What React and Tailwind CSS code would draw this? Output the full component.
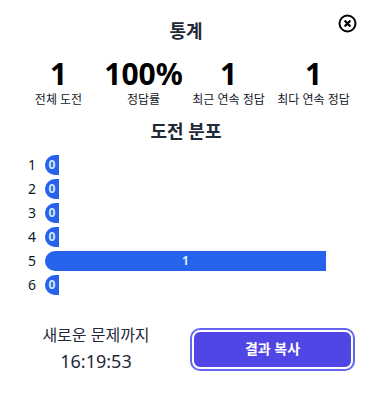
import React from "react";

const stats = [
  { value: "1", label: "전체 도전" },
  { value: "100%", label: "정답률" },
  { value: "1", label: "최근 연속 정답" },
  { value: "1", label: "최다 연속 정답" },
];

const dist = [0, 0, 0, 0, 1, 0];

export default function App() {
  const max = Math.max(...dist);
  return (
    <div
      className="relative w-[372px] h-[393px] bg-white text-[#111827]"
      style={{ fontFamily: '"Noto Sans", "Noto Sans CJK KR", sans-serif' }}
    >
      <button className="absolute left-[337px] top-[13px] w-[21px] h-[21px] flex items-center justify-center">
        <svg width="21" height="21" viewBox="0 0 21 21" fill="none">
          <circle cx="10.5" cy="10.5" r="8" stroke="#000" strokeWidth="2" />
          <path d="M8.3 8.3 L12.7 12.7 M12.7 8.3 L8.3 12.7" stroke="#000" strokeWidth="2.3" strokeLinecap="round" />
        </svg>
      </button>

      <div className="pt-[19px] text-center text-lg leading-[24px] font-semibold text-[#1f2937]">
        통계
      </div>

      <div className="mt-[13px] px-[16px] grid grid-cols-4">
        {stats.map((s, i) => (
          <div key={i} className="flex flex-col items-center">
            <div className="text-[30px] leading-[36px] font-bold text-black">{s.value}</div>
            <div className="text-xs leading-4 text-[#111827]">{s.label}</div>
          </div>
        ))}
      </div>

      <div className="mt-[11px] text-center text-lg leading-[24px] font-semibold text-[#1f2937]">
        도전 분포
      </div>

      <div className="mt-[12px] flex flex-col gap-[4px] pl-[28px] pr-[46px]">
        {dist.map((v, i) => (
          <div key={i} className="flex items-center h-[20px]">
            <div className="w-[9px] text-sm leading-5 text-[#111827]">{i + 1}</div>
            <div className="flex-1 ml-[8px] h-[20px]">
              <div
                className="h-[20px] min-w-[14px] bg-[#2563eb] rounded-l-full flex items-center justify-center text-xs font-bold text-[#dbeafe]"
                style={{ width: max ? `${(v / max) * 100}%` : "14px" }}
              >
                {v}
              </div>
            </div>
          </div>
        ))}
      </div>

      <div className="mt-[28px] flex items-center px-[16px]">
        <div className="w-[160px] flex flex-col items-center text-[#1f2937]">
          <div className="text-base leading-[24px]">새로운 문제까지</div>
          <div className="text-lg leading-[28px]">16:19:53</div>
        </div>
        <div className="ml-[16px] w-[161px] h-[39px] rounded-[8px] bg-[#4f46e5] border-2 border-white ring-2 ring-[#6366f1] flex items-center justify-center text-sm font-bold text-white">
          결과 복사
        </div>
      </div>
    </div>
  );
}
